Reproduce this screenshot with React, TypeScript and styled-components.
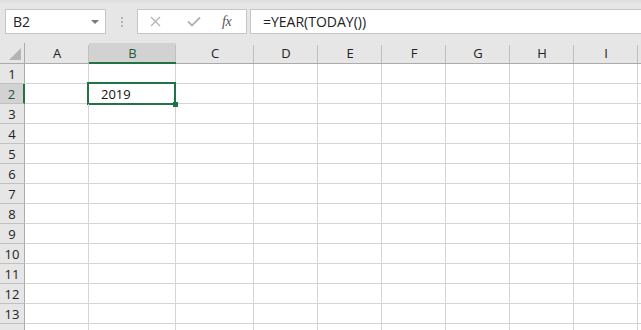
import React from "react";
import styled, { createGlobalStyle } from "styled-components";

const GREEN = "#217346";
const GRID = "#d4d4d4";

const Global = createGlobalStyle`
  html, body { margin: 0; padding: 0; background: #fff; }
  body { font-family: "Segoe UI", "Open Sans", "Noto Sans", sans-serif; overflow: hidden; }
`;

const Page = styled.div`
  width: 641px;
  height: 330px;
  overflow: hidden;
  background: #fff;
`;

const FormulaBar = styled.div`
  height: 43px;
  box-sizing: border-box;
  background: linear-gradient(#dcdcdc 0px, #e6e6e6 4px, #e6e6e6 100%);
  display: flex;
  align-items: flex-start;
  padding-top: 9px;
  padding-left: 5px;
`;

const NameBox = styled.div`
  width: 101px;
  height: 25px;
  box-sizing: border-box;
  background: #fff;
  border: 1px solid #c6c6c6;
  display: flex;
  align-items: center;
  justify-content: space-between;
  padding: 0 6px 0 7px;
  font-size: 14px;
  color: #222;
`;

const Caret = styled.span`
  width: 0;
  height: 0;
  border-left: 4px solid transparent;
  border-right: 4px solid transparent;
  border-top: 4px solid #7a7a7a;
`;

const Dots = styled.div`
  width: 31px;
  height: 25px;
  display: flex;
  flex-direction: column;
  align-items: center;
  justify-content: center;
  gap: 2px;
  span {
    width: 2px;
    height: 2px;
    background: #b4b4b4;
  }
`;

const FxBox = styled.div`
  width: 110px;
  height: 25px;
  box-sizing: border-box;
  background: #fff;
  border: 1px solid #c6c6c6;
  display: flex;
  align-items: center;
  padding-left: 12px;
`;

const IconSlot = styled.div<{ $w: number }>`
  width: ${(p) => p.$w}px;
  display: flex;
  align-items: center;
  justify-content: flex-start;
`;

const Fx = styled.span`
  font-family: "Liberation Serif", "DejaVu Serif", serif;
  font-style: italic;
  font-size: 14px;
  color: #555;
  letter-spacing: -0.5px;
`;

const FormulaInput = styled.div`
  flex: 1;
  margin-left: 3px;
  height: 25px;
  box-sizing: border-box;
  background: #fff;
  border: 1px solid #c6c6c6;
  border-right: none;
  display: flex;
  align-items: center;
  padding-left: 12px;
  font-size: 14px;
  color: #222;
`;

const COLS = [
  { name: "A", w: 64 },
  { name: "B", w: 87 },
  { name: "C", w: 78 },
  { name: "D", w: 64 },
  { name: "E", w: 64 },
  { name: "F", w: 64 },
  { name: "G", w: 64 },
  { name: "H", w: 64 },
  { name: "I", w: 64 },
  { name: "", w: 10 },
];

const HeaderRow = styled.div`
  display: flex;
  height: 21px;
  background: #e6e6e6;
`;

const Corner = styled.div`
  width: 25px;
  flex: none;
  box-sizing: border-box;
  height: 21px;
  border-right: 1px solid #ababab;
  border-bottom: 1px solid #ababab;
  display: flex;
  align-items: flex-end;
  justify-content: flex-end;
  padding: 0 3px 3px 0;
`;

const ColHead = styled.div<{ $w: number; $sel?: boolean }>`
  width: ${(p) => p.$w}px;
  flex: none;
  box-sizing: border-box;
  height: 21px;
  background: ${(p) => (p.$sel ? "#d2d2d2" : "#e6e6e6")};
  border-bottom: ${(p) => (p.$sel ? `2px solid ${GREEN}` : "1px solid #ababab")};
  display: flex;
  align-items: center;
  justify-content: center;
  font-size: 13px;
  color: ${(p) => (p.$sel ? "#1e5a3a" : "#222")};
  position: relative;
  padding-top: ${(p) => (p.$sel ? 1 : 0)}px;
  &::after {
    content: "";
    position: absolute;
    right: 0;
    top: 2px;
    bottom: 0;
    width: 1px;
    background: #c0c0c0;
  }
`;

const Row = styled.div`
  display: flex;
  height: 20px;
`;

const RowHead = styled.div<{ $sel?: boolean }>`
  width: 25px;
  flex: none;
  box-sizing: border-box;
  background: ${(p) => (p.$sel ? "#d2d2d2" : "#e6e6e6")};
  border-right: ${(p) => (p.$sel ? `2px solid ${GREEN}` : "1px solid #ababab")};
  border-bottom: 1px solid #c0c0c0;
  display: flex;
  align-items: center;
  justify-content: center;
  font-size: 13px;
  color: ${(p) => (p.$sel ? "#1e5a3a" : "#222")};
`;

const Cell = styled.div<{ $w: number; $sel?: boolean }>`
  width: ${(p) => p.$w}px;
  flex: none;
  box-sizing: border-box;
  border-right: 1px solid ${GRID};
  border-bottom: 1px solid ${GRID};
  position: relative;
  display: flex;
  align-items: center;
  padding-left: 12px;
  font-family: "Open Sans", "Noto Sans", sans-serif;
  font-size: 13px;
  color: #111;
  ${(p) =>
    p.$sel
      ? `
    &::before {
      content: "";
      position: absolute;
      left: -2px;
      top: -2px;
      right: -1px;
      bottom: -2px;
      border: 2px solid ${GREEN};
      pointer-events: none;
    }
  `
      : ""}
`;

const FillHandle = styled.span`
  position: absolute;
  right: -3px;
  bottom: -4px;
  width: 5px;
  height: 5px;
  background: ${GREEN};
  z-index: 1;
`;

const ROWS = Array.from({ length: 14 }, (_, i) => i + 1);

export default function App() {
  return (
    <Page>
      <Global />
      <FormulaBar>
        <NameBox>
          <span>B2</span>
          <Caret />
        </NameBox>
        <Dots>
          <span />
          <span />
          <span />
        </Dots>
        <FxBox>
          <IconSlot $w={37}>
            <svg width="11" height="11" viewBox="0 0 11 11">
              <path d="M1 1 L10 10 M10 1 L1 10" stroke="#b3b3b3" strokeWidth="1.3" fill="none" />
            </svg>
          </IconSlot>
          <IconSlot $w={35}>
            <svg width="14" height="11" viewBox="0 0 14 11">
              <path d="M1 5.5 L5 9.5 L13 1.5" stroke="#b3b3b3" strokeWidth="1.8" fill="none" />
            </svg>
          </IconSlot>
          <IconSlot $w={20}>
            <Fx>fx</Fx>
          </IconSlot>
        </FxBox>
        <FormulaInput>=YEAR(TODAY())</FormulaInput>
      </FormulaBar>
      <HeaderRow>
        <Corner>
          <svg width="12" height="12" viewBox="0 0 12 12">
            <path d="M12 0 L12 12 L0 12 Z" fill="#b4b4b4" />
          </svg>
        </Corner>
        {COLS.map((c, i) => (
          <ColHead key={i} $w={c.w} $sel={c.name === "B"}>
            {c.name}
          </ColHead>
        ))}
      </HeaderRow>
      {ROWS.map((r) => (
        <Row key={r}>
          <RowHead $sel={r === 2}>{r <= 13 ? r : null}</RowHead>
          {COLS.map((c, i) => {
            const sel = r === 2 && c.name === "B";
            return (
              <Cell key={i} $w={c.w} $sel={sel}>
                {sel ? "2019" : null}
                {sel ? <FillHandle /> : null}
              </Cell>
            );
          })}
        </Row>
      ))}
    </Page>
  );
}
